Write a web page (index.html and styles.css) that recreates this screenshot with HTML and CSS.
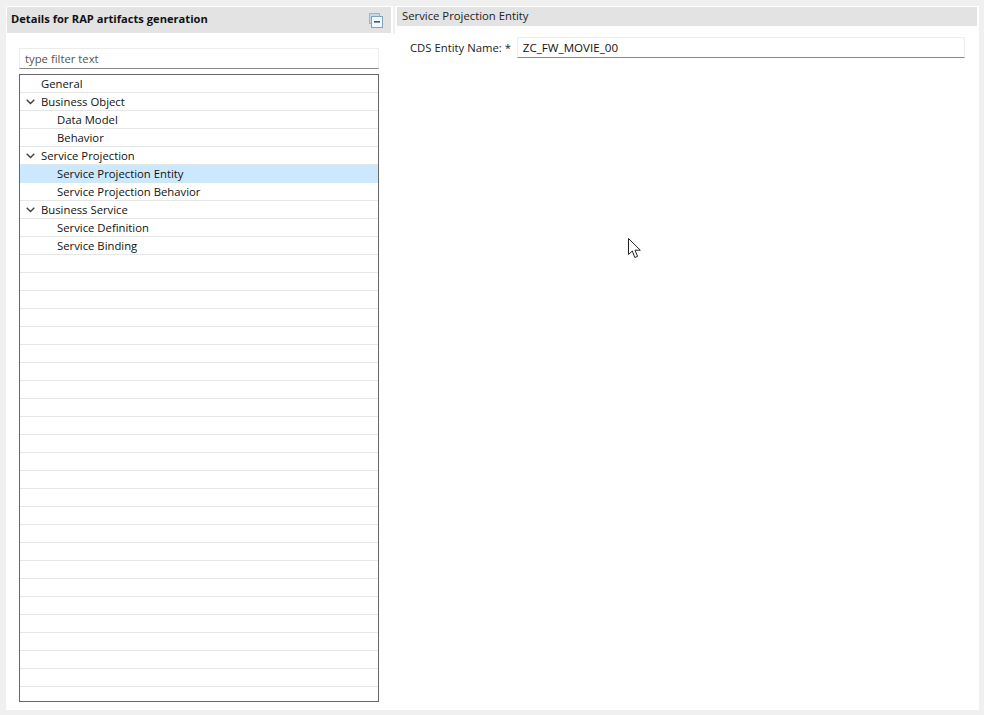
FILE: index.html
```html
<!DOCTYPE html>
<html lang="en">
<head>
<meta charset="utf-8">
<title>Details for RAP artifacts generation</title>
<link rel="stylesheet" href="styles.css">
</head>
<body>
<div class="frame">
  <section class="master">
    <header class="master-head">
      <h1 class="master-title">Details for RAP artifacts generation</h1>
      <svg class="collapse" width="14" height="15" viewBox="0 0 14 15" aria-hidden="true">
        <rect x="0.5" y="0.5" width="10" height="10" fill="#c9d8e6" stroke="#9db4ca"/>
        <rect x="2.5" y="3.5" width="11" height="11" fill="#f2f7fb" stroke="#7fa3c6"/>
        <rect x="5" y="8" width="6" height="1.6" fill="#2b5f8f"/>
      </svg>
    </header>
    <div class="master-body">
      <div class="filter">type filter text</div>
      <div class="tree">
        <div class="row row-l1">General</div>
        <div class="row row-l1"><svg class="chev" width="9" height="6" viewBox="0 0 9 6"><path d="M0.7 0.7 4.5 4.5 8.3 0.7" fill="none" stroke="#404040" stroke-width="1.4"/></svg>Business Object</div>
        <div class="row row-l2">Data Model</div>
        <div class="row row-l2">Behavior</div>
        <div class="row row-l1"><svg class="chev" width="9" height="6" viewBox="0 0 9 6"><path d="M0.7 0.7 4.5 4.5 8.3 0.7" fill="none" stroke="#404040" stroke-width="1.4"/></svg>Service Projection</div>
        <div class="row row-l2 row-selected">Service Projection Entity</div>
        <div class="row row-l2">Service Projection Behavior</div>
        <div class="row row-l1"><svg class="chev" width="9" height="6" viewBox="0 0 9 6"><path d="M0.7 0.7 4.5 4.5 8.3 0.7" fill="none" stroke="#404040" stroke-width="1.4"/></svg>Business Service</div>
        <div class="row row-l2">Service Definition</div>
        <div class="row row-l2">Service Binding</div>
        <div class="row"></div><div class="row"></div><div class="row"></div><div class="row"></div>
        <div class="row"></div><div class="row"></div><div class="row"></div><div class="row"></div>
        <div class="row"></div><div class="row"></div><div class="row"></div><div class="row"></div>
        <div class="row"></div><div class="row"></div><div class="row"></div><div class="row"></div>
        <div class="row"></div><div class="row"></div><div class="row"></div><div class="row"></div>
        <div class="row"></div><div class="row"></div><div class="row"></div><div class="row"></div>
        <div class="row"></div>
      </div>
    </div>
  </section>
  <div class="sash"></div>
  <section class="detail">
    <header class="detail-head">Service Projection Entity</header>
    <div class="field">
      <label class="field-label">CDS Entity Name: *</label>
      <div class="field-input">ZC_FW_MOVIE_00</div>
    </div>
  </section>
  <svg class="cursor" width="13" height="21" viewBox="0 0 13 21" aria-hidden="true">
    <path d="M0.5 0.5V16.5L4.3 13 6.8 19.5 9.6 18.4 7 12.2H12.3Z" fill="#fff" stroke="#222" stroke-width="1"/>
  </svg>
</div>
</body>
</html>
```
FILE: styles.css
```css
html, body {
  margin: 0;
  height: 100%;
  background: #f0f0f0;
}
body {
  font-family: "Open Sans", "Noto Sans", sans-serif;
  font-size: 11.3px;
  color: #111;
  padding: 6px 5px 5px 6px;
  box-sizing: border-box;
  overflow: hidden;
}
.frame {
  position: relative;
  display: flex;
  height: 704px;
  padding: 1px 0 0 1px;
  box-sizing: border-box;
  background: #fff;
  border-top-left-radius: 2px;
}
.master {
  width: 384px;
  flex: none;
  display: flex;
  flex-direction: column;
}
.master-head {
  height: 26px;
  flex: none;
  background: #e3e3e3;
  display: flex;
  align-items: center;
  justify-content: space-between;
  padding: 0 8px 3px 4px;
  box-sizing: border-box;
}
.master-title {
  margin: 0;
  font-size: 11.15px;
  font-weight: 700;
  color: #111;
}
.collapse {
  margin-top: 3px;
}
.master-body {
  padding: 15px 12px 8px;
  display: flex;
  flex-direction: column;
  flex: 1;
  min-height: 0;
}
.filter {
  height: 21px;
  line-height: 20px;
  box-sizing: border-box;
  padding-left: 5px;
  color: #555;
  background: #fff;
  border: 1px solid #ececec;
  border-bottom: 1px solid #8a8a8a;
  flex: none;
}
.tree {
  margin-top: 5px;
  flex: 1;
  min-height: 0;
  width: 360px;
  box-sizing: border-box;
  border: 1px solid #666;
  overflow: hidden;
}
.row {
  height: 18px;
  line-height: 17px;
  box-sizing: border-box;
  border-bottom: 1px solid #e6e6e6;
  white-space: nowrap;
}
.row-l1 {
  padding-left: 21px;
  position: relative;
}
.row-l2 {
  padding-left: 37px;
}
.row-selected {
  background: #cce8ff;
  border-bottom-color: #cce8ff;
}
.chev {
  position: absolute;
  left: 6px;
  top: 6px;
}
.sash {
  flex: none;
  width: 2px;
  height: 28px;
  margin: -1px 2px 0;
  background: #f0f0f0;
}
.detail {
  flex: 1;
  display: flex;
  flex-direction: column;
  padding-right: 2px;
}
.detail-head {
  height: 19px;
  line-height: 18px;
  background: #e3e3e3;
  padding-left: 5px;
  color: #222;
}
.field {
  display: flex;
  align-items: center;
  gap: 6px;
  margin-top: 11px;
  padding: 0 12px 0 13px;
}
.field-label {
  color: #222;
  white-space: nowrap;
}
.field-input {
  flex: 1;
  height: 21px;
  line-height: 20px;
  box-sizing: border-box;
  padding-left: 5px;
  font-size: 11.6px;
  border: 1px solid #ececec;
  border-bottom: 1px solid #8a8a8a;
}
.cursor {
  position: absolute;
  left: 622px;
  top: 232px;
}
```
